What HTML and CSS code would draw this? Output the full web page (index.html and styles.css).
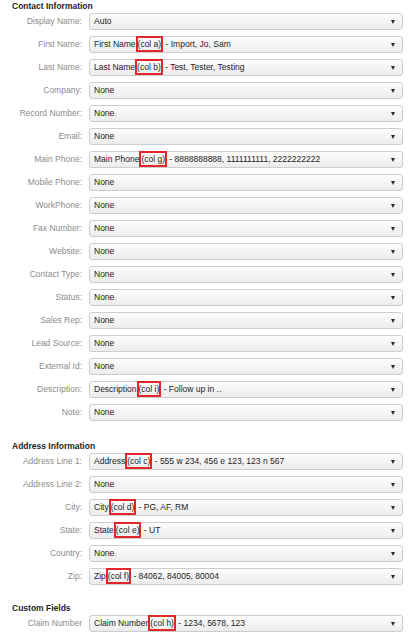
FILE: index.html
```html
<!DOCTYPE html>
<html lang="en">
<head>
<meta charset="utf-8">
<title>Import Mapping</title>
<link rel="stylesheet" href="styles.css">
</head>
<body>
<div class="page">
  <section class="section">
    <h2 class="heading">Contact Information</h2>
    <div class="rows">
      <div class="row"><label class="label">Display Name:</label><div class="select"><span class="value">Auto</span><span class="arrow"></span></div></div>
      <div class="row"><label class="label">First Name:</label><div class="select"><span class="value">First Name<span class="mark">(col a)</span> - Import, Jo, Sam</span><span class="arrow"></span></div></div>
      <div class="row"><label class="label">Last Name:</label><div class="select"><span class="value">Last Name<span class="mark">(col b)</span> - Test, Tester, Testing</span><span class="arrow"></span></div></div>
      <div class="row"><label class="label">Company:</label><div class="select"><span class="value">None</span><span class="arrow"></span></div></div>
      <div class="row"><label class="label">Record Number:</label><div class="select"><span class="value">None</span><span class="arrow"></span></div></div>
      <div class="row"><label class="label">Email:</label><div class="select"><span class="value">None</span><span class="arrow"></span></div></div>
      <div class="row"><label class="label">Main Phone:</label><div class="select"><span class="value">Main Phone<span class="mark">(col g)</span> - 8888888888, 1111111111, 2222222222</span><span class="arrow"></span></div></div>
      <div class="row"><label class="label">Mobile Phone:</label><div class="select"><span class="value">None</span><span class="arrow"></span></div></div>
      <div class="row"><label class="label">WorkPhone:</label><div class="select"><span class="value">None</span><span class="arrow"></span></div></div>
      <div class="row"><label class="label">Fax Number:</label><div class="select"><span class="value">None</span><span class="arrow"></span></div></div>
      <div class="row"><label class="label">Website:</label><div class="select"><span class="value">None</span><span class="arrow"></span></div></div>
      <div class="row"><label class="label">Contact Type:</label><div class="select"><span class="value">None</span><span class="arrow"></span></div></div>
      <div class="row"><label class="label">Status:</label><div class="select"><span class="value">None</span><span class="arrow"></span></div></div>
      <div class="row"><label class="label">Sales Rep:</label><div class="select"><span class="value">None</span><span class="arrow"></span></div></div>
      <div class="row"><label class="label">Lead Source:</label><div class="select"><span class="value">None</span><span class="arrow"></span></div></div>
      <div class="row"><label class="label">External Id:</label><div class="select"><span class="value">None</span><span class="arrow"></span></div></div>
      <div class="row"><label class="label">Description:</label><div class="select"><span class="value">Description<span class="mark">(col i)</span> - Follow up in ..</span><span class="arrow"></span></div></div>
      <div class="row"><label class="label">Note:</label><div class="select"><span class="value">None</span><span class="arrow"></span></div></div>
    </div>
  </section>

  <section class="section section-address">
    <h2 class="heading">Address Information</h2>
    <div class="rows">
      <div class="row"><label class="label">Address Line 1:</label><div class="select"><span class="value">Address<span class="mark">(col c)</span> - 555 w 234, 456 e 123, 123 n 567</span><span class="arrow"></span></div></div>
      <div class="row"><label class="label">Address Line 2:</label><div class="select"><span class="value">None</span><span class="arrow"></span></div></div>
      <div class="row"><label class="label">City:</label><div class="select"><span class="value">City<span class="mark">(col d)</span> - PG, AF, RM</span><span class="arrow"></span></div></div>
      <div class="row"><label class="label">State:</label><div class="select"><span class="value">State<span class="mark">(col e)</span> - UT</span><span class="arrow"></span></div></div>
      <div class="row"><label class="label">Country:</label><div class="select"><span class="value">None</span><span class="arrow"></span></div></div>
      <div class="row"><label class="label">Zip:</label><div class="select"><span class="value">Zip<span class="mark">(col f)</span> - 84062, 84005, 80004</span><span class="arrow"></span></div></div>
    </div>
  </section>

  <section class="section section-custom">
    <h2 class="heading">Custom Fields</h2>
    <div class="rows">
      <div class="row"><label class="label">Claim Number</label><div class="select"><span class="value">Claim Number<span class="mark">(col h)</span> - 1234, 5678, 123</span><span class="arrow"></span></div></div>
    </div>
  </section>
</div>
</body>
</html>
```

FILE: styles.css
```css
* { box-sizing: border-box; }

html, body {
  margin: 0;
  padding: 0;
  background: #ffffff;
}

body {
  font-family: "Liberation Sans", Arial, Helvetica, sans-serif;
  font-size: 8.5px;
  color: #222222;
  width: 410px;
  height: 634px;
  overflow: hidden;
}

.page {
  padding: 0 7px 0 12px;
}

.section-address { margin-top: 19px; }
.section-custom { margin-top: 17px; }

.heading {
  margin: 0 0 1px 0;
  font-size: 8.5px;
  font-weight: bold;
  line-height: 12px;
  color: #1e1e1e;
}

.rows {
  display: flex;
  flex-direction: column;
  gap: 6px;
}

.row {
  display: grid;
  grid-template-columns: 70px 1fr;
  column-gap: 7px;
  align-items: center;
}

.label {
  text-align: right;
  color: #8c8c8c;
  white-space: nowrap;
  line-height: 17px;
}

.select {
  height: 17px;
  border: 1px solid #cdcdcd;
  border-radius: 3px;
  background: linear-gradient(#fdfdfd, #ececec);
  display: flex;
  align-items: center;
  justify-content: space-between;
  padding: 0 7px 0 4px;
}

.value {
  color: #222222;
  white-space: nowrap;
  line-height: 13px;
}

.mark {
  display: inline-block;
  border: 2px solid #e3262b;
  line-height: 12px;
  vertical-align: middle;
  margin-top: -2px;
}

.arrow {
  width: 0;
  height: 0;
  border-left: 2.5px solid transparent;
  border-right: 2.5px solid transparent;
  border-top: 4px solid #2a2a2a;
  flex: none;
}
```
